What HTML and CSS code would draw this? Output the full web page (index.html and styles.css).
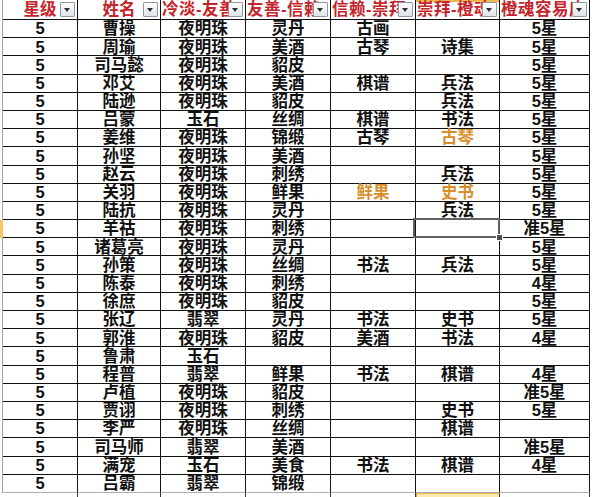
FILE: index.html
```html
<!DOCTYPE html>
<html lang="zh">
<head>
<meta charset="utf-8">
<title>sheet</title>
<link rel="stylesheet" href="styles.css">
</head>
<body>
<div class="sheet">
  <div class="h"><span class="ht">星级</span><span class="dd"></span></div>
  <div class="h"><span class="ht">姓名</span><span class="dd"></span></div>
  <div class="h long"><span class="ht">冷淡-友善</span><span class="dd"></span></div>
  <div class="h long"><span class="ht">友善-信赖</span><span class="dd"></span></div>
  <div class="h long"><span class="ht">信赖-崇拜</span><span class="dd"></span></div>
  <div class="h long hl"><span class="ht">崇拜-橙魂</span><span class="dd"></span></div>
  <div class="h long"><span class="ht">橙魂容易度</span><span class="dd"></span></div>

  <div class="c n">5</div><div class="c">曹操</div><div class="c">夜明珠</div><div class="c">灵丹</div><div class="c">古画</div><div class="c"></div><div class="c">5星</div>
  <div class="c n">5</div><div class="c">周瑜</div><div class="c">夜明珠</div><div class="c">美酒</div><div class="c">古琴</div><div class="c">诗集</div><div class="c">5星</div>
  <div class="c n">5</div><div class="c">司马懿</div><div class="c">夜明珠</div><div class="c">貂皮</div><div class="c"></div><div class="c"></div><div class="c">5星</div>
  <div class="c n">5</div><div class="c">邓艾</div><div class="c">夜明珠</div><div class="c">美酒</div><div class="c">棋谱</div><div class="c">兵法</div><div class="c">5星</div>
  <div class="c n">5</div><div class="c">陆逊</div><div class="c">夜明珠</div><div class="c">貂皮</div><div class="c"></div><div class="c">兵法</div><div class="c">5星</div>
  <div class="c n">5</div><div class="c">吕蒙</div><div class="c">玉石</div><div class="c">丝绸</div><div class="c">棋谱</div><div class="c">书法</div><div class="c">5星</div>
  <div class="c n">5</div><div class="c">姜维</div><div class="c">夜明珠</div><div class="c">锦缎</div><div class="c">古琴</div><div class="c o">古琴</div><div class="c">5星</div>
  <div class="c n">5</div><div class="c">孙坚</div><div class="c">夜明珠</div><div class="c">美酒</div><div class="c"></div><div class="c"></div><div class="c">5星</div>
  <div class="c n">5</div><div class="c">赵云</div><div class="c">夜明珠</div><div class="c">刺绣</div><div class="c"></div><div class="c">兵法</div><div class="c">5星</div>
  <div class="c n">5</div><div class="c">关羽</div><div class="c">夜明珠</div><div class="c">鲜果</div><div class="c o">鲜果</div><div class="c o">史书</div><div class="c">5星</div>
  <div class="c n">5</div><div class="c">陆抗</div><div class="c">夜明珠</div><div class="c">灵丹</div><div class="c"></div><div class="c">兵法</div><div class="c">5星</div>
  <div class="c n mark">5</div><div class="c">羊祜</div><div class="c">夜明珠</div><div class="c">刺绣</div><div class="c"></div><div class="c sel"></div><div class="c">准5星</div>
  <div class="c n">5</div><div class="c">诸葛亮</div><div class="c">夜明珠</div><div class="c">灵丹</div><div class="c"></div><div class="c"></div><div class="c">5星</div>
  <div class="c n">5</div><div class="c">孙策</div><div class="c">夜明珠</div><div class="c">丝绸</div><div class="c">书法</div><div class="c">兵法</div><div class="c">5星</div>
  <div class="c n">5</div><div class="c">陈泰</div><div class="c">夜明珠</div><div class="c">刺绣</div><div class="c"></div><div class="c"></div><div class="c">4星</div>
  <div class="c n">5</div><div class="c">徐庶</div><div class="c">夜明珠</div><div class="c">貂皮</div><div class="c"></div><div class="c"></div><div class="c">5星</div>
  <div class="c n">5</div><div class="c">张辽</div><div class="c">翡翠</div><div class="c">灵丹</div><div class="c">书法</div><div class="c">史书</div><div class="c">5星</div>
  <div class="c n">5</div><div class="c">郭淮</div><div class="c">夜明珠</div><div class="c">貂皮</div><div class="c">美酒</div><div class="c">书法</div><div class="c">4星</div>
  <div class="c n">5</div><div class="c">鲁肃</div><div class="c">玉石</div><div class="c"></div><div class="c"></div><div class="c"></div><div class="c"></div>
  <div class="c n">5</div><div class="c">程普</div><div class="c">翡翠</div><div class="c">鲜果</div><div class="c">书法</div><div class="c">棋谱</div><div class="c">4星</div>
  <div class="c n">5</div><div class="c">卢植</div><div class="c">夜明珠</div><div class="c">貂皮</div><div class="c"></div><div class="c"></div><div class="c">准5星</div>
  <div class="c n">5</div><div class="c">贾诩</div><div class="c">夜明珠</div><div class="c">刺绣</div><div class="c"></div><div class="c">史书</div><div class="c">5星</div>
  <div class="c n">5</div><div class="c">李严</div><div class="c">夜明珠</div><div class="c">丝绸</div><div class="c"></div><div class="c">棋谱</div><div class="c"></div>
  <div class="c n">5</div><div class="c">司马师</div><div class="c">翡翠</div><div class="c">美酒</div><div class="c"></div><div class="c"></div><div class="c">准5星</div>
  <div class="c n">5</div><div class="c">满宠</div><div class="c">玉石</div><div class="c">美食</div><div class="c">书法</div><div class="c">棋谱</div><div class="c">4星</div>
  <div class="c n last">5</div><div class="c last">吕霸</div><div class="c last">翡翠</div><div class="c last">锦缎</div><div class="c last"></div><div class="c last"></div><div class="c last"></div>
</div>
<div class="foot">
  <div class="f"></div><div class="f"></div><div class="f"></div><div class="f"></div><div class="f"></div><div class="f fy"></div><div class="f"></div>
</div>
</body>
</html>
```

FILE: styles.css
```css
html, body {
  margin: 0;
  padding: 0;
  background: #ffffff;
}

body {
  width: 600px;
  height: 497px;
  overflow: hidden;
}

.sheet {
  margin-left: 2px;
  width: 588px;
  border-left: 1px solid #9ba5b0;
  display: grid;
  grid-template-columns: 75px 83px 85px 85px 85px 84px 90px;
  grid-template-rows: 20px repeat(26, 18.2px);
  font-family: "Liberation Sans", "Noto Sans CJK SC", sans-serif;
  font-weight: 700;
}

.h,
.c {
  box-sizing: border-box;
  border-right: 1px solid #111;
  border-bottom: 1px solid #111;
  display: flex;
  align-items: center;
  justify-content: center;
  white-space: nowrap;
  line-height: 1;
}

.h {
  position: relative;
  overflow: hidden;
  color: #c4242b;
  font-size: 16.5px;
  background: #ffffff;
}

.h.long {
  justify-content: flex-start;
  padding-left: 1px;
  letter-spacing: 0.5px;
}

.h.hl {
  box-shadow: inset 0 2px 0 #f3b84c;
}

.dd {
  position: absolute;
  right: 2px;
  top: 2px;
  width: 15px;
  height: 15px;
  box-sizing: border-box;
  border: 1px solid #8f9bab;
  border-radius: 1px;
  background: linear-gradient(#ffffff, #dfe4ea);
}

.dd::after {
  content: "";
  position: absolute;
  left: 3px;
  top: 5px;
  border-left: 3.5px solid transparent;
  border-right: 3.5px solid transparent;
  border-top: 4px solid #333;
}

.c {
  font-size: 16.5px;
  color: #111111;
}

.c.o {
  color: #d98e2b;
}

.c.mark {
  box-shadow: -3px 0 0 #f5c66a;
}

.c.sel {
  position: relative;
  z-index: 1;
}

.c.sel::before {
  content: "";
  position: absolute;
  left: -3px;
  top: -2px;
  right: -1px;
  bottom: -1px;
  border: 2px solid #606060;
}

.c.sel::after {
  content: "";
  position: absolute;
  right: -4px;
  bottom: -4px;
  width: 5px;
  height: 5px;
  background: #505050;
  border: 1px solid #ffffff;
}

.c.last {
  border-bottom-color: #a9b0b8;
}

.foot {
  margin-left: 3px;
  display: grid;
  grid-template-columns: 75px 83px 85px 85px 85px 84px 90px;
  height: 4px;
}

.f {
  box-sizing: border-box;
  border-right: 1px solid #333;
}

.f.fy {
  background: #fde9a9;
  border-top: 1px solid #ecb24f;
  border-left: 1px solid #c9a060;
}
```
